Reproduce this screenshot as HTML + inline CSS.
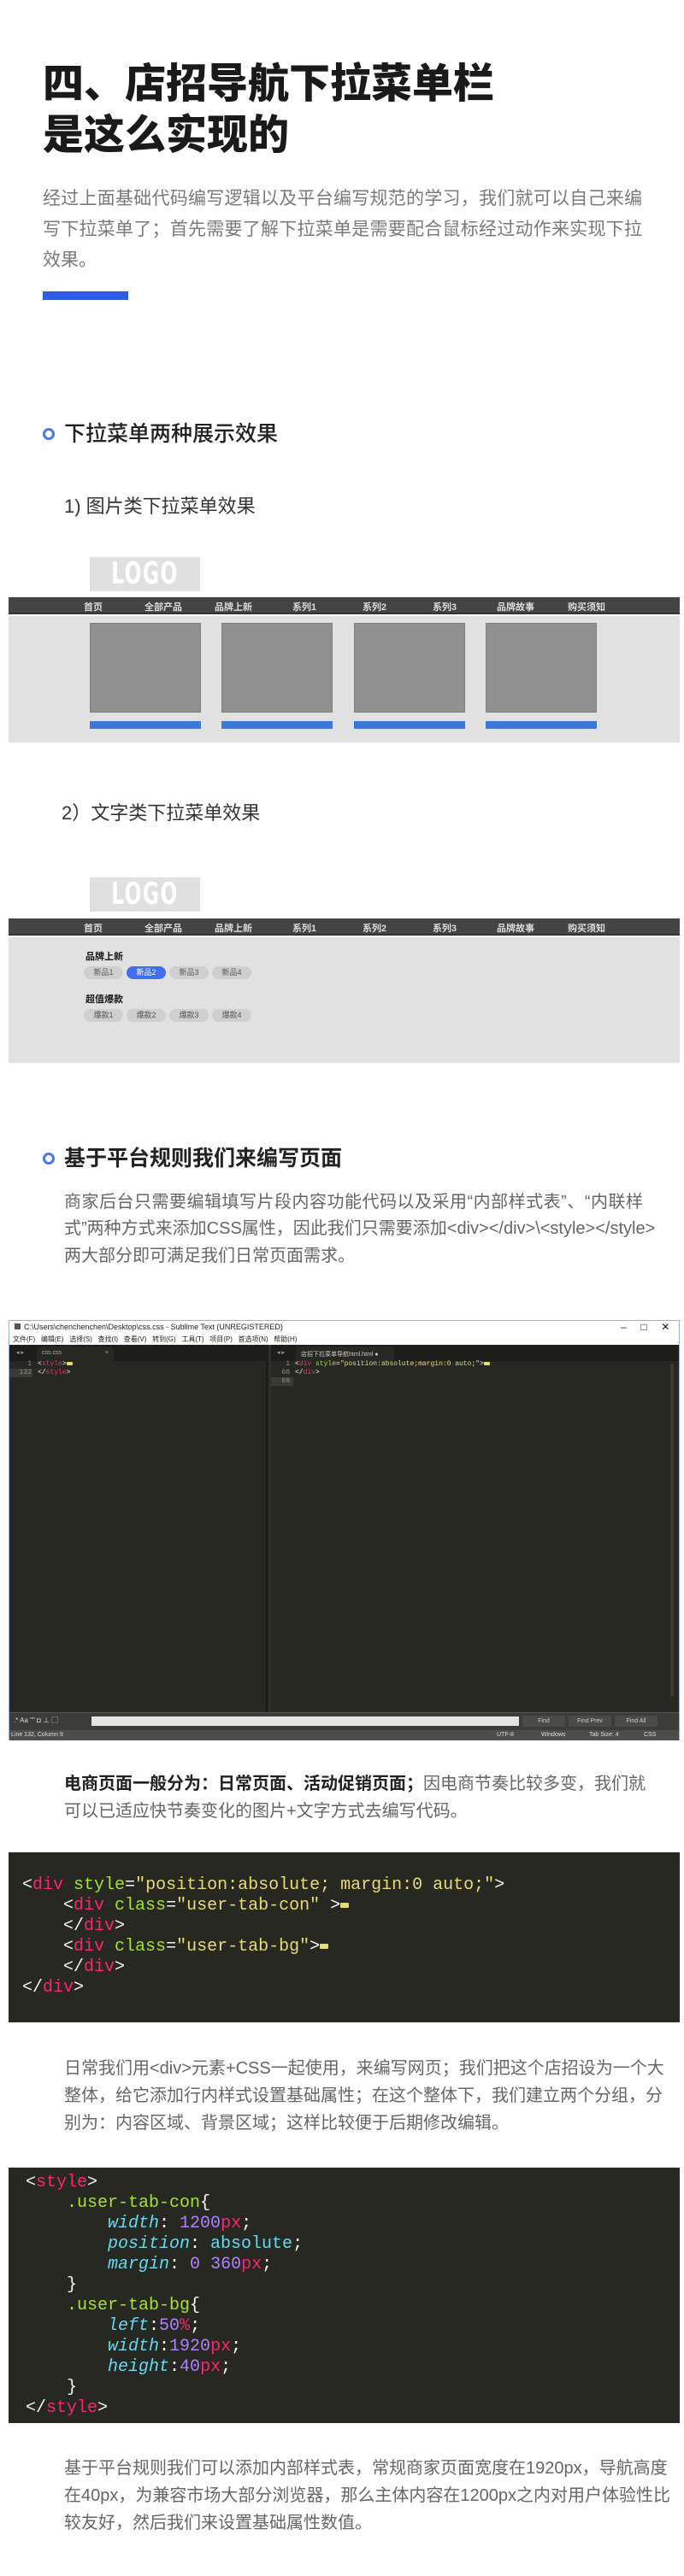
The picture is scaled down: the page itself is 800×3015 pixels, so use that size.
<!DOCTYPE html>
<html><head><meta charset="utf-8">
<style>
*{margin:0;padding:0;box-sizing:border-box}
body{width:800px;height:3015px;background:#fff;position:relative;overflow:hidden;font-family:"Liberation Sans","Noto Sans CJK SC",sans-serif}
.a{position:absolute;white-space:nowrap}
.t{font-size:48px;font-weight:900;color:#1a1a1a;left:50px;line-height:60px}
.p{font-size:21px;color:#7a7a7a;line-height:36px;left:50px;width:701px;text-align-last:justify}
.q{font-size:20px;color:#666;line-height:32px;left:75px;width:677px;text-align-last:justify}
.nj{text-align-last:left}
.ring{position:absolute;width:14px;height:14px;border:3px solid #4a76ea;border-radius:50%}
.h{font-size:25px;color:#222;left:75px;line-height:32px}
.logo{position:absolute;left:105px;width:129px;height:40px;background:#e0e0e0;overflow:hidden}
.logo span{position:absolute;left:0;width:129px;top:1px;color:#fff;font:bold 36px/38px "DejaVu Sans Condensed","Liberation Sans Narrow",sans-serif;text-align:center;transform:scaleX(0.72);letter-spacing:2px}
.nav{position:absolute;left:10px;width:785px;height:20px;background:#444;border-bottom:2px solid #333}
.nav span{position:absolute;top:3px;font-size:11px;font-weight:bold;color:#ddd;transform:translateX(-50%)}
.gray{position:absolute;left:10px;width:785px;background:#e1e1e1}
.box{position:absolute;top:729px;width:130px;height:105px;background:#909090;border:1px solid #7f7f7f}
.bar{position:absolute;top:844px;width:130px;height:9px;background:#3b78d8}
.chip{position:absolute;width:46px;height:15px;border-radius:8px;background:#cfcfcf;font-size:9px;line-height:15px;text-align:center;color:#555}
.lbl{position:absolute;left:100px;font-size:11px;font-weight:bold;color:#111}
.code{position:absolute;left:10px;width:785px;background:#272822;font-family:"Liberation Mono","DejaVu Sans Mono",monospace;font-size:20px;line-height:24px;color:#f8f8f2;white-space:pre}
.k{color:#f92672}.g{color:#a6e22e}.s{color:#e6db74}.c{color:#66d9ef;font-style:italic}.c2{color:#66d9ef}.n{color:#ae81ff}
.dot{display:inline-block;width:10px;height:6px;background:#e6db74;border-radius:1px;vertical-align:middle}
.sub{position:absolute;left:10px;top:1545px;width:785px;height:492px;background:#272822;border:1px solid #9ab6d6;font-size:9px}
</style></head><body>

<div class="a t" style="top:69px">四、店招导航下拉菜单栏</div>
<div class="a t" style="top:129px">是这么实现的</div>

<div class="a p" style="top:215px">经过上面基础代码编写逻辑以及平台编写规范的学习，我们就可以自己来编</div>
<div class="a p" style="top:251px">写下拉菜单了；首先需要了解下拉菜单是需要配合鼠标经过动作来实现下拉</div>
<div class="a p nj" style="top:287px">效果。</div>
<div class="a" style="left:50px;top:341px;width:100px;height:10px;background:#2c5be8"></div>

<div class="ring" style="left:50px;top:501px"></div>
<div class="a h" style="top:492px;font-weight:500">下拉菜单两种展示效果</div>

<div class="a" style="left:75px;top:580px;font-size:22px;color:#333;line-height:26px">1) 图片类下拉菜单效果</div>

<div class="logo" style="top:652px"><span>LOGO</span></div>
<div class="nav" style="top:699px"><span style="left:99px">首页</span><span style="left:181px">全部产品</span><span style="left:263px">品牌上新</span><span style="left:346px">系列1</span><span style="left:428px">系列2</span><span style="left:510px">系列3</span><span style="left:593px">品牌故事</span><span style="left:676px">购买须知</span></div>
<div class="gray" style="top:721px;height:148px"></div>
<div class="box" style="left:105px"></div><div class="box" style="left:259px"></div><div class="box" style="left:414px"></div><div class="box" style="left:568px"></div>
<div class="bar" style="left:105px"></div><div class="bar" style="left:259px"></div><div class="bar" style="left:414px"></div><div class="bar" style="left:568px"></div>

<div class="a" style="left:72px;top:939px;font-size:22px;color:#333;line-height:26px">2）文字类下拉菜单效果</div>

<div class="logo" style="top:1027px"><span>LOGO</span></div>
<div class="nav" style="top:1075px"><span style="left:99px">首页</span><span style="left:181px">全部产品</span><span style="left:263px">品牌上新</span><span style="left:346px">系列1</span><span style="left:428px">系列2</span><span style="left:510px">系列3</span><span style="left:593px">品牌故事</span><span style="left:676px">购买须知</span></div>
<div class="gray" style="top:1097px;height:147px"></div>
<div class="lbl" style="top:1111px">品牌上新</div>
<div class="chip" style="left:98px;top:1131px">新品1</div>
<div class="chip" style="left:148px;top:1131px;background:#3f6ff0;color:#fff">新品2</div>
<div class="chip" style="left:198px;top:1131px">新品3</div>
<div class="chip" style="left:248px;top:1131px">新品4</div>
<div class="lbl" style="top:1161px">超值爆款</div>
<div class="chip" style="left:98px;top:1181px">爆款1</div>
<div class="chip" style="left:148px;top:1181px">爆款2</div>
<div class="chip" style="left:198px;top:1181px">爆款3</div>
<div class="chip" style="left:248px;top:1181px">爆款4</div>

<div class="ring" style="left:50px;top:1349px"></div>
<div class="a h" style="top:1340px;font-weight:bold">基于平台规则我们来编写页面</div>
<div class="a q" style="top:1391px">商家后台只需要编辑填写片段内容功能代码以及采用“内部样式表”、“内联样</div>
<div class="a q" style="top:1422px">式”两种方式来添加CSS属性，因此我们只需要添加&lt;div&gt;&lt;/div&gt;\&lt;style&gt;&lt;/style&gt;</div>
<div class="a q nj" style="top:1454px">两大部分即可满足我们日常页面需求。</div>

<div class="sub">
 <div class="a" style="left:0;top:0;width:783px;height:28px;background:#fff"></div>
 <div class="a" style="left:6px;top:3px;width:7px;height:7px;background:#555"></div>
 <div class="a" style="left:17px;top:2px;color:#222">C:\Users\chenchenchen\Desktop\css.css - Sublime Text (UNREGISTERED)</div>
 <div class="a" style="left:715px;top:0px;color:#222;font-size:12px">–&nbsp;&nbsp;&nbsp;&nbsp;&nbsp;□&nbsp;&nbsp;&nbsp;&nbsp;&nbsp;✕</div>
 <div class="a" style="left:4px;top:16px;color:#222;font-size:8px">文件(F)&nbsp;&nbsp;&nbsp;编辑(E)&nbsp;&nbsp;&nbsp;选择(S)&nbsp;&nbsp;&nbsp;查找(I)&nbsp;&nbsp;&nbsp;查看(V)&nbsp;&nbsp;&nbsp;转到(G)&nbsp;&nbsp;&nbsp;工具(T)&nbsp;&nbsp;&nbsp;项目(P)&nbsp;&nbsp;&nbsp;首选项(N)&nbsp;&nbsp;&nbsp;帮助(H)</div>
 <div class="a" style="left:0;top:28px;width:783px;height:19px;background:#1d1e1a"></div>
 <div class="a" style="left:32px;top:30px;width:90px;height:17px;background:#272822;border-radius:4px 4px 0 0;color:#aaa;font-size:7px;padding:4px 6px">css.css<span style="float:right">×</span></div>
 <div class="a" style="left:335px;top:30px;width:115px;height:17px;background:#272822;border-radius:4px 4px 0 0;color:#ccc;font-size:7px;padding:4px 6px">店招下拉菜单导航html.html ●</div>
 <div class="a" style="left:8px;top:33px;color:#aaa;font-size:7px">◂ ▸</div>
 <div class="a" style="left:313px;top:33px;color:#aaa;font-size:7px">◂ ▸</div>
 <div class="a" style="left:300px;top:28px;width:5px;height:463px;background:#1d1e1a"></div>
 <div class="a" style="left:303px;top:28px;width:3px;height:463px;background:#2f302b"></div>
 <div class="a" style="left:773px;top:50px;width:4px;height:390px;background:#3a3b36"></div>
 <div class="a" style="left:0;top:56px;width:27px;height:10px;background:#3a3b35"></div>
 <div class="a" style="left:306px;top:66px;width:26px;height:10px;background:#3a3b35"></div>
 <div class="a" style="left:6px;top:46px;color:#90908a;font-family:'Liberation Mono',monospace;font-size:8px;line-height:10px;text-align:right;width:20px">1<br>132</div>
 <div class="a" style="left:33px;top:46px;font-family:'Liberation Mono',monospace;font-size:8px;line-height:10px;color:#f8f8f2">&lt;<span class="k">style</span>&gt;<span class="dot" style="width:7px;height:4px"></span><br>&lt;/<span class="k">style</span>&gt;</div>
 <div class="a" style="left:310px;top:46px;color:#90908a;font-family:'Liberation Mono',monospace;font-size:8px;line-height:10px;text-align:right;width:18px">1<br>68<br>69</div>
 <div class="a" style="left:334px;top:46px;font-family:'Liberation Mono',monospace;font-size:8px;line-height:10px;color:#f8f8f2">&lt;<span class="k">div</span> <span class="g">style</span>=<span class="s">"position:absolute;margin:0 auto;"</span>&gt;<span class="dot" style="width:7px;height:4px"></span><br>&lt;/<span class="k">div</span>&gt;</div>
 <div class="a" style="left:0;top:458px;width:783px;height:21px;background:#3c3d38;border-top:1px solid #555"></div>
 <div class="a" style="left:5px;top:462px;color:#ddd;font-size:8px">.* Aa &quot;&quot; ◘ ⊥ ▢</div>
 <div class="a" style="left:96px;top:463px;width:500px;height:11px;background:#e4e4e4"></div>
 <div class="a" style="left:600px;top:462px;width:50px;height:13px;background:#4a4b46;color:#ccc;font-size:7px;text-align:center;line-height:13px">Find</div>
 <div class="a" style="left:654px;top:462px;width:50px;height:13px;background:#4a4b46;color:#ccc;font-size:7px;text-align:center;line-height:13px">Find Prev</div>
 <div class="a" style="left:708px;top:462px;width:50px;height:13px;background:#4a4b46;color:#ccc;font-size:7px;text-align:center;line-height:13px">Find All</div>
 <div class="a" style="left:0;top:479px;width:783px;height:12px;background:#4d4e49;color:#ddd;font-size:7px;line-height:12px;padding-left:2px">Line 132, Column 9
  <span style="position:absolute;left:570px">UTF-8</span><span style="position:absolute;left:622px">Windows</span><span style="position:absolute;left:678px">Tab Size: 4</span><span style="position:absolute;left:742px">CSS</span></div>
</div>

<div class="a q" style="top:2072px"><b style="color:#222;font-weight:bold">电商页面一般分为：日常页面、活动促销页面；</b>因电商节奏比较多变，我们就</div>
<div class="a q nj" style="top:2104px">可以已适应快节奏变化的图片+文字方式去编写代码。</div>

<div class="code" style="top:2168px;height:199px;padding:27px 0 0 16px">&lt;<span class="k">div</span> <span class="g">style</span>=<span class="s">"position:absolute; margin:0 auto;"</span>&gt;
    &lt;<span class="k">div</span> <span class="g">class</span>=<span class="s">"user-tab-con"</span> &gt;<span class="dot"></span>
    &lt;/<span class="k">div</span>&gt;
    &lt;<span class="k">div</span> <span class="g">class</span>=<span class="s">"user-tab-bg"</span>&gt;<span class="dot"></span>
    &lt;/<span class="k">div</span>&gt;
&lt;/<span class="k">div</span>&gt;</div>

<div class="a q" style="top:2405px">日常我们用&lt;div&gt;元素+CSS一起使用，来编写网页；我们把这个店招设为一个大</div>
<div class="a q" style="top:2437px">整体，给它添加行内样式设置基础属性；在这个整体下，我们建立两个分组，分</div>
<div class="a q nj" style="top:2469px">别为：内容区域、背景区域；这样比较便于后期修改编辑。</div>

<div class="code" style="top:2537px;height:299px;padding:6px 0 0 20px">&lt;<span class="k">style</span>&gt;
    <span class="g">.user-tab-con</span>{
        <span class="c">width</span>: <span class="n">1200</span><span class="k">px</span>;
        <span class="c">position</span>: <span class="c2">absolute</span>;
        <span class="c">margin</span>: <span class="n">0</span> <span class="n">360</span><span class="k">px</span>;
    }
    <span class="g">.user-tab-bg</span>{
        <span class="c">left</span>:<span class="n">50</span><span class="k">%</span>;
        <span class="c">width</span>:<span class="n">1920</span><span class="k">px</span>;
        <span class="c">height</span>:<span class="n">40</span><span class="k">px</span>;
    }
&lt;/<span class="k">style</span>&gt;</div>

<div class="a q" style="top:2873px">基于平台规则我们可以添加内部样式表，常规商家页面宽度在1920px，导航高度</div>
<div class="a q" style="top:2905px">在40px，为兼容市场大部分浏览器，那么主体内容在1200px之内对用户体验性比</div>
<div class="a q nj" style="top:2937px">较友好，然后我们来设置基础属性数值。</div>

</body></html>
